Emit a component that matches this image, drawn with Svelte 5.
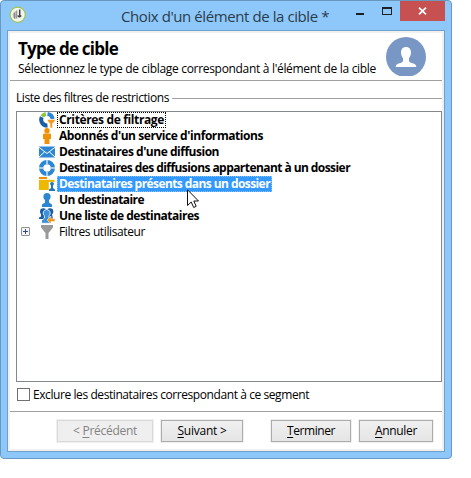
<script>
  const rows = [
    { icon: 'criteria', text: 'Critères de filtrage', width: 105, focus: true },
    { icon: 'person', text: "Abonnés d'un service d'informations", width: 204 },
    { icon: 'mail', text: "Destinataires d'une diffusion", width: 160 },
    { icon: 'ring', text: 'Destinataires des diffusions appartenant à un dossier', width: 291 },
    { icon: 'folder', text: 'Destinataires présents dans un dossier', width: 211, selected: true },
    { icon: 'pawn', text: 'Un destinataire', width: 85 },
    { icon: 'group', text: 'Une liste de destinataires', width: 140 },
    { icon: 'funnel', text: 'Filtres utilisateur', width: 86, plain: true }
  ];

  const buttons = [
    { before: '< ', key: 'P', after: 'récédent', width: 64, cls: 'prev' },
    { before: '', key: 'S', after: 'uivant >', width: 49, cls: 'next' },
    { before: '', key: 'T', after: 'erminer', width: 48, cls: 'finish' },
    { before: '', key: 'A', after: 'nnuler', width: 42, cls: 'cancel' }
  ];

  // Spreads the letters of a label so that it takes exactly the given width.
  function fit(node, width) {
    const range = document.createRange();
    range.selectNodeContents(node);
    const natural = range.getBoundingClientRect().width;
    const count = node.textContent.length;
    node.style.letterSpacing = `${(width - natural) / count}px`;
  }
</script>

<div class="window">
  <header class="titlebar">
    <svg class="logo" width="17" height="17" viewBox="0 0 17 17">
      <circle cx="8.7" cy="8.7" r="7.6" fill="#f4f5ef" stroke="#9cc653" stroke-width="1.200" />
      <path d="M3.800 8.200Q4.500 5.500 7 5V13L4 11.500Z" fill="#bbb" />
      <path d="M7.700 4.500V12.500M5.500 7V12.500" stroke="#888" stroke-width="1.100" />
      <path d="M10.700 3.500V11M8.800 9.500Q10 12 12.200 9.500" stroke="#444" stroke-width="1.500" fill="none" />
    </svg>
    <span class="caption" use:fit={208}>Choix d'un élément de la cible *</span>
    <div class="controls">
      <svg width="43" height="20" viewBox="0 0 43 20">
        <rect x="1" y="12" width="8" height="2" fill="#1c1f24" />
        <path d="M27 6h10v8h-10zM28 8v5h8v-5z" fill="#1c1f24" fill-rule="evenodd" />
      </svg>
    </div>
    <div class="close">
      <svg width="9" height="8" viewBox="0 0 9 8"><path d="M1 .6L8 7.400M8 .6L1 7.400" stroke="#fff" stroke-width="1.700" /></svg>
    </div>
  </header>

  <main class="client">
    <section class="heading">
      <div class="texts">
        <h1 use:fit={100}>Type de cible</h1>
        <p><span use:fit={358}>Sélectionnez le type de ciblage correspondant à l'élément de la cible</span></p>
      </div>
      <svg class="avatar" width="40" height="39" viewBox="0 0 40 39">
        <circle cx="20" cy="20" r="20" fill="#7897c5" />
        <path d="M20 10c3.400 0 5 2.300 5 5.600 0 2.200-.8 4.200-2 5.600v2.500c0 1.500 2 2 4.300 2.700 2 .6 2.900 1.600 3 3.600H9.700c.1-2 1-3 3-3.600 2.300-.7 4.300-1.200 4.300-2.700v-2.500c-1.200-1.400-2-3.400-2-5.600 0-3.300 1.600-5.600 5-5.600z" fill="#fff" />
      </svg>
    </section>

    <div class="legend"><span use:fit={153}>Liste des filtres de restrictions</span><i></i></div>

    <ul class="list">
      {#each rows as row}
        <li class:bold={!row.plain}>
          <span class="expander">
            {#if row.plain}
              <svg width="9" height="9" viewBox="0 0 9 9">
                <rect x=".5" y=".5" width="8" height="8" rx=".5" fill="#f4f4f4" stroke="#919191" />
                <path d="M2 4.500h5M4.500 2v5" stroke="#304b8c" />
              </svg>
            {/if}
          </span>
          <svg class="icon" width="16" height="16" viewBox="0 0 16 16">
            {#if row.icon === 'criteria'}
              <path d="M6.900 2A5.900 5.900 0 0 0 3.200 4.500" stroke="#8cc63f" stroke-width="4" fill="none" />
              <path d="M8.500 2A5.900 5.900 0 0 1 13.600 7" stroke="#2d86d2" stroke-width="4" fill="none" />
              <path d="M2.800 5.200A5.800 5.800 0 0 0 8.500 13.500" stroke="#1b5ea6" stroke-width="4" fill="none" />
              <path d="M8.500 7.500H16V9l-2.600 2.700V16h-2.400v-4.300L8.500 9z" fill="#f29a24" stroke="#fff" stroke-width=".5" />
            {:else if row.icon === 'person'}
              <circle cx="8" cy="2.800" r="2.700" fill="#ef9108" />
              <path d="M5 5.600h6q1 0 1 1V11h-1.500v5h-5v-5H4V6.600q0-1 1-1z" fill="#ef9108" />
            {:else if row.icon === 'mail'}
              <path d="M0 2.500h16v11H0z" fill="#2d86d2" />
              <path d="M0 3.300l8 6.200L16 3.300M0 13l5.700-5.200M16 13l-5.700-5.200" stroke="#fff" fill="none" />
            {:else if row.icon === 'ring'}
              <circle cx="8" cy="8" r="5.900" fill="none" stroke="#2d86d2" stroke-width="4.200" />
              <path d="M8 0v4M8 12v4M0 8h4M12 8h4" stroke="#c9e2f5" stroke-width="1.500" />
            {:else if row.icon === 'folder'}
              <path d="M0 1h8v2H0z" fill="#ef9108" />
              <path d="M0 3.800h15.500V14H0z" fill="#edb900" />
              <path d="M9.800 6H16v10H9.800z" fill="#fff" />
              <circle cx="13" cy="7.800" r="1.900" fill="#2376be" />
              <path d="M12 9h2v3l2 1.500V15h-6v-1.500l2-1.500z" fill="#2376be" />
            {:else if row.icon === 'pawn'}
              <circle cx="8" cy="4.700" r="3.600" fill="#2d86d2" />
              <path d="M6 7h4v3.500l3 2V15H3v-2.500l3-2z" fill="#2d86d2" />
            {:else if row.icon === 'group'}
              <circle cx="4.300" cy="3.500" r="3.300" fill="#1b5ea6" />
              <circle cx="11" cy="3.500" r="3.300" fill="#1b5ea6" />
              <path d="M2 6h11l1 5H0V9.500l2-1z" fill="#1b5ea6" />
              <path d="M7.700 1.500a3.600 3.600 0 0 1 2.300 6.300v2.400l2 1.800v3.300H2.500V12.500l2.900-2.300V7.800a3.600 3.600 0 0 1 2.300-6.300z" fill="#3b91d9" stroke="#fff" stroke-width=".8" />
              <path d="M8 12l4-4v2.700h4v2.800h-4V16z" fill="#f49717" stroke="#fff" stroke-width=".5" />
            {:else}
              <path d="M2 1h12v2.500L9.500 9v6h-3V9L2 3.500z" fill="#999" />
            {/if}
          </svg>
          <span class="label" class:focus={row.focus} class:selected={row.selected}><span use:fit={row.width}>{row.text}</span></span>
        </li>
      {/each}
    </ul>

    <label class="exclude"><span class="box"></span><span use:fit={276}>Exclure les destinataires correspondant à ce segment</span></label>

    <footer>
      {#each buttons as b}
        <button class={b.cls} disabled={b.cls === 'prev'}><span use:fit={b.width}>{b.before}<u>{b.key}</u>{b.after}</span></button>
      {/each}
    </footer>
  </main>

  <svg class="cursor" width="13" height="20" viewBox="0 0 13 20">
    <path d="M.5 .8V16.500L4.200 13l2.500 5.500 2.500-1.200L6.800 12H11.500z" fill="#fff" stroke="#111" stroke-width="1" />
  </svg>
</div>

<style>
  :global(body) { background: #fff; }
  .window {
    box-sizing: border-box;
    position: relative;
    width: 452px;
    height: 459px;
    padding: 0 6px;
    border: 1px solid #6998c1;
    border-radius: 4px;
    background: #8ec8fa;
    color: #000;
    font: 12px/16px "Open Sans", "Noto Sans", sans-serif;
  }
  .titlebar { display: flex; height: 29px; align-items: flex-start; }
  .logo { margin: 5px 0 0 2px; flex: none; }
  .caption { width: 207px; margin-left: 95px; padding-top: 4px; font-size: 15px; line-height: 22px; color: #2b3c4b; flex: none; white-space: nowrap; }
  .controls { width: 43px; margin-left: 27px; flex: none; }
  .controls svg { display: block; }
  .close { width: 45px; height: 20px; margin-left: auto; background: #c75050; display: flex; align-items: center; justify-content: center; }
  .client {
    box-sizing: border-box;
    height: 422px;
    border: 1px solid #6fa0cc;
    padding: 2px;
    background: linear-gradient(#fff, #fff) content-box, #f0f0f0;
  }
  .heading { display: flex; justify-content: space-between; height: 47px; border-bottom: 1px solid #a0a0a0; padding: 0 16px 0 8px; }
  .texts { width: 360px; white-space: nowrap; }
  h1 { margin: 5px 0 0; font-size: 17px; line-height: 22px; }
  p { margin: 1px 0 0; }
  .avatar { margin-top: 4px; flex: none; }
  .legend { display: flex; height: 30px; padding: 9px 0 0 6px; box-sizing: border-box; white-space: nowrap; }
  .legend span { width: 156px; flex: none; }
  .legend i { flex: 1; height: 1px; margin-top: 8px; background: #a0a0a0; }
  .list { box-sizing: border-box; width: 426px; height: 271px; margin: 0 0 0 6px; padding: 0; border: 1px solid #828790; list-style: none; }
  li { display: flex; height: 16px; white-space: nowrap; }
  .bold { font-weight: 700; }
  .expander { width: 22px; padding: 3px 0 0 4px; box-sizing: border-box; line-height: 0; flex: none; }
  .icon { flex: none; }
  .label { box-sizing: border-box; margin-left: 2px; height: 16px; padding: 0 1px; border: 1px solid transparent; line-height: 14px; }
  .label.focus { border: 1px dotted #000; }
  .label.selected { background: #3399ff; border: 1px dotted #8cc8ff; color: #fff; }
  .exclude { display: flex; height: 29px; padding: 6px 0 0 7px; box-sizing: border-box; line-height: 14px; white-space: nowrap; }
  .box { box-sizing: border-box; width: 13px; height: 13px; margin-right: 3px; border: 1px solid #707070; flex: none; }
  footer { display: flex; height: 37px; border-top: 1px solid #a0a0a0; padding: 8px 0 0 47px; box-sizing: border-box; }
  button {
    box-sizing: border-box;
    height: 22px;
    padding: 0;
    border: 1px solid #acacac;
    box-shadow: 0 0 0 1px #f0f0f0;
    background: linear-gradient(#f0f0f0, #e5e5e5);
    color: #000;
    font: 12px/18px "Open Sans", "Noto Sans", sans-serif;
    white-space: pre;
  }
  button:disabled { color: #838383; background: #efefef; border-color: #d9d9d9; }
  u { text-underline-offset: 2px; }
  .prev { width: 96px; }
  .next { width: 82px; margin-left: 8px; }
  .finish { width: 80px; margin-left: 28px; }
  .cancel { width: 74px; margin-left: 8px; }
  .cursor { position: absolute; left: 186px; top: 188px; }
</style>
